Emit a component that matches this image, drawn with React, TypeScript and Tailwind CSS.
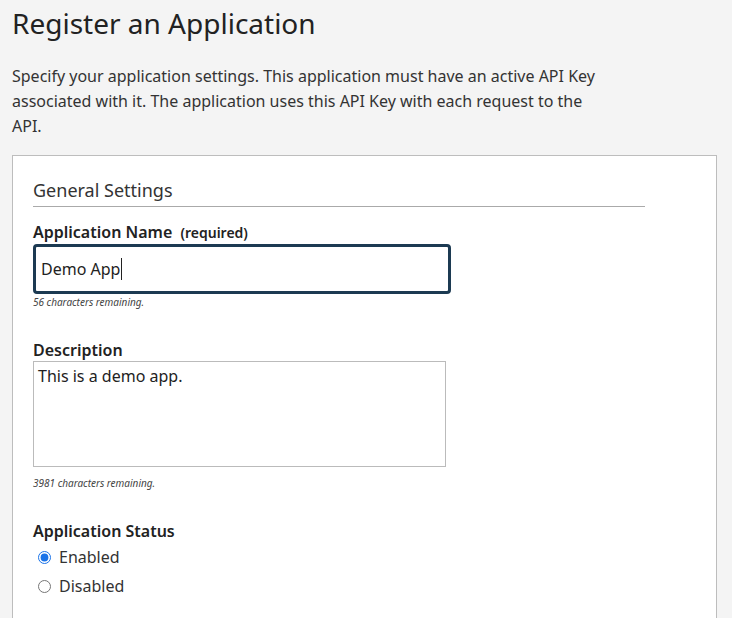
export default function App() {
  return (
    <div className="min-h-[618px] bg-[#f4f4f4] px-3 pt-[4px] font-['Open_Sans',sans-serif] text-[#222]">
      <h1 className="text-[28px] leading-[38px] font-normal text-[#222]">Register an Application</h1>
      <p className="mt-[22px] w-[600px] text-[16px] leading-[25px] text-[#333]">
        Specify your application settings. This application must have an active API Key associated with it. The
        application uses this API Key with each request to the API.
      </p>
      <div className="mt-[16px] h-[470px] w-[705px] border border-[#bdbdbd] bg-white px-5 pt-[22px]">
        {/* GENERAL SETTINGS */}
        <h2 className="w-[612px] border-b border-[#aaa] pb-[4px] text-[18px] leading-[24px] text-[#333]">
          General Settings
        </h2>
        <label className="mt-[14px] block text-[16px] leading-[22px] font-semibold text-[#222]">
          Application Name <span className="ml-1 text-[14px]">(required)</span>
        </label>
        <div className="flex h-[50px] w-[418px] items-center rounded-[4px] border-[3px] border-[#1c3a52] px-[5px] text-[16px]">
          Demo App<span className="ml-px inline-block h-[22px] w-px bg-[#222]" />
        </div>
        <p className="mt-[1px] text-[10px] italic leading-[14px] text-[#444]">56 characters remaining.</p>

        {/* DESCRIPTION */}
        <label className="mt-[30px] block text-[16px] leading-[22px] font-semibold text-[#222]">Description</label>
        <div className="h-[106px] w-[413px] border border-[#bbb] px-[4px] py-[3px] text-[16px] leading-[22px]">
          This is a demo app.
        </div>
        <p className="mt-[9px] text-[10px] italic leading-[14px] text-[#444]">3981 characters remaining.</p>

        {/* STATUS */}
        <label className="mt-[30px] block text-[16px] leading-[22px] font-semibold text-[#222]">Application Status</label>
        <div className="mt-[4px] flex flex-col gap-[7px] pl-[5px] text-[16px] leading-[22px] text-[#333]">
          <label className="flex items-center gap-[8px]">
            <input type="radio" name="status" defaultChecked className="h-[13px] w-[13px] accent-[#1a73e8]" />
            Enabled
          </label>
          <label className="flex items-center gap-[8px]">
            <input type="radio" name="status" className="h-[13px] w-[13px]" />
            Disabled
          </label>
        </div>
      </div>
    </div>
  );
}
